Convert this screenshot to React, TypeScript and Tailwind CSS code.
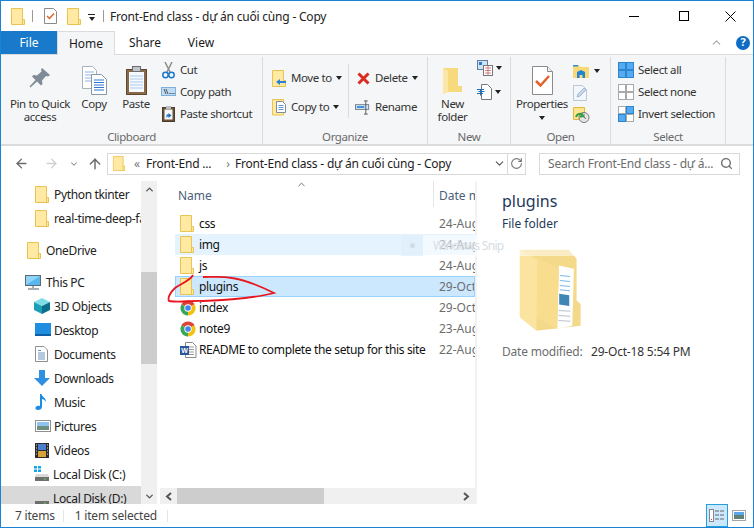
import type { ReactNode } from "react";
import { ArrowLeft, ArrowRight, ArrowUp, ChevronDown, ChevronUp, RotateCw, Search } from "lucide-react";

const Folder = ({ className = "" }: { className?: string }) => (
  <svg width="14" height="17" viewBox="0 0 14 17" className={className}>
    <path d="M.5.5h11v11h2v5H.5z" fill="#ffe9a3" stroke="#e9c452" />
    <path d="M11.5 11.5v5" stroke="#e9c452" />
  </svg>
);

const Chrome = () => (
  <svg width="16" height="16" viewBox="0 0 16 16">
    <path d="M8 8L1.5 4.25A7.5 7.5 0 0 1 14.5 4.25z" fill="#db4437" />
    <path d="M8 8L14.5 4.25A7.5 7.5 0 0 1 8 15.5z" fill="#f4c20d" />
    <path d="M8 8L8 15.5A7.5 7.5 0 0 1 1.5 4.25z" fill="#3aa757" />
    <circle cx="8" cy="8" r="3.7" fill="#fff" />
    <circle cx="8" cy="8" r="2.8" fill="#4285f4" />
  </svg>
);

const WordDoc = () => (
  <svg width="17" height="16" viewBox="0 0 17 16">
    <path d="M5.5.5h7l3.5 3.5v11.500h-10.500z" fill="#fff" stroke="#8a8a8a" />
    <path d="M8 5h6M8 7.500h6M8 10h6M8 12.500h6" stroke="#9a9a9a" />
    <rect x="0" y="4" width="9" height="9" fill="#2b579a" />
    <text x="1.300" y="11" fontSize="7" fontWeight="700" fill="#fff" fontFamily="Liberation Sans">W</text>
  </svg>
);

const PinIcon = () => (
  <svg width="22" height="22" viewBox="0 0 22 22">
    <path d="M13 1l8 7-2 1.500-2-.5-4 4.500.5 3.500-1.500 1.500-4-4-6.500 6-1-1 6-6.500-3.500-3.500 1.500-1.500 3.500.5 4.500-4-.5-2z" fill="#7f8b96" />
  </svg>
);

const CopyBig = () => (
  <svg width="25" height="29" viewBox="0 0 25 29">
    <path d="M.5.5h10l4 4v18H.5z" fill="#fff" stroke="#a9b2bb" />
    <path d="M3 6h9M3 9h9M3 12h9M3 15h9" stroke="#8db4e2" />
    <path d="M9.500 8.500h10l5 5v15h-15z" fill="#fff" stroke="#8a97a5" />
    <path d="M12 14h10M12 16.500h10M12 19h10M12 21.500h10M12 24h10" stroke="#2b78d0" />
  </svg>
);

const PasteBig = () => (
  <svg width="21" height="29" viewBox="0 0 21 29">
    <rect x=".5" y="3.500" width="20" height="25" fill="#8a6a45" stroke="#5e4a34" />
    <rect x="3" y="6" width="15" height="20" fill="#f6f9fd" />
    <path d="M4 10h13M4 13h13M4 16h13M4 19h13M4 22h13" stroke="#a9cbe9" />
    <rect x="6.500" y=".5" width="8" height="5" fill="#bfc5cb" stroke="#6c6c6c" />
  </svg>
);

const Scissors = () => (
  <svg width="13" height="17" viewBox="0 0 13 17">
    <path d="M3 0l5 10M10 0L5 10" stroke="#8d8d8d" strokeWidth="1.500" />
    <circle cx="3.500" cy="13" r="2.700" fill="none" stroke="#1d79c9" strokeWidth="1.500" />
    <circle cx="9.500" cy="13" r="2.700" fill="none" stroke="#1d79c9" strokeWidth="1.500" />
  </svg>
);

const CopyPath = () => (
  <svg width="15" height="10" viewBox="0 0 15 10">
    <rect x=".5" y=".5" width="14" height="8" fill="#bfdcf5" stroke="#7fb0dc" />
    <path d="M3 2l2 5M5 2l2 5" stroke="#333" strokeWidth=".8" />
    <path d="M8.500 6.500h1M10.500 6.500h1M12.500 6.500h1" stroke="#333" />
  </svg>
);

const PasteShortcut = () => (
  <svg width="13" height="16" viewBox="0 0 13 16">
    <rect x=".5" y="1.500" width="12" height="14" fill="#6a5238" stroke="#4a3a28" />
    <rect x="2.500" y="3.500" width="8" height="10" fill="#f5f7fa" />
    <path d="M4.500 12V8.500h2V7l3 2.500-3 2.500v-1.500h-1z" fill="#1f6fbe" />
    <rect x="4" y="0" width="5" height="3" fill="#b9bec4" />
  </svg>
);

const MoveTo = () => (
  <svg width="14" height="17" viewBox="0 0 14 17">
    <path d="M.5.5h11v10h2v6H.5z" fill="#ffe9a3" stroke="#e9c452" />
    <path d="M4 12l4-3v2h6v2H8v2z" fill="#2b82d4" />
  </svg>
);

const CopyTo = () => (
  <svg width="14" height="17" viewBox="0 0 14 17">
    <path d="M.5.500h11v15.500H.5z" fill="#ffe9a3" stroke="#e9c452" />
    <path d="M4.500 2.500h6l3 3v8h-9z" fill="#fff" stroke="#7d8b99" />
    <path d="M6.500 6.500h5M6.500 8.500h5M6.500 10.500h5" stroke="#5b94cf" />
  </svg>
);

const DeleteX = () => (
  <svg width="13" height="13" viewBox="0 0 13 13">
    <path d="M1.500 1.500l10 10M11.500 1.500l-10 10" stroke="#d92b20" strokeWidth="3" />
  </svg>
);

const RenameIcon = () => (
  <svg width="17" height="15" viewBox="0 0 17 15">
    <rect x=".5" y="4.500" width="14" height="5" fill="#d8eafa" stroke="#6d7a87" />
    <rect x="2" y="6" width="8" height="2" fill="#3a8dde" />
    <path d="M11.500.5v14M9.500.5h4M9.500 14.500h4" stroke="#555" />
  </svg>
);

const NewFolderBig = () => (
  <svg width="21" height="28" viewBox="0 0 21 28">
    <path d="M1 1h15v18h4v6H6l-5 2z" fill="#f7d97e" />
    <path d="M1 1l5 3v21l-5 2z" fill="#fbe7a8" />
  </svg>
);

const NewItem = () => (
  <svg width="16" height="16" viewBox="0 0 16 16">
    <rect x=".5" y=".5" width="10" height="9" fill="#cfe3f5" stroke="#5f7f9f" />
    <rect x="2" y="2" width="3" height="3" fill="#2b78d0" />
    <rect x="6.500" y="5.500" width="9" height="10" fill="#fff" stroke="#777" />
    <path d="M8 8h6M8 10.500h6M8 13h6M11 6v9" stroke="#c0504d" strokeWidth=".7" />
  </svg>
);

const EasyAccess = () => (
  <svg width="15" height="16" viewBox="0 0 15 16">
    <path d="M4.500.5h6l4 4v11h-10z" fill="#fff" stroke="#777" />
    <path d="M0 5.500h7M1.500 7.500h6M0 9.500h6" stroke="#1d6fbe" />
    <path d="M3.500 5.500v6" stroke="#1d6fbe" />
  </svg>
);

const PropertiesBig = () => (
  <svg width="21" height="29" viewBox="0 0 21 29">
    <path d="M.5.5h15l5 5v23H.5z" fill="#fff" stroke="#8b8b8b" />
    <path d="M15.500.5v5h5" fill="#eee" stroke="#8b8b8b" />
    <path d="M4 15l4.500 4.500L17 10" fill="none" stroke="#e2622a" strokeWidth="2.500" />
  </svg>
);

const OpenIcon = () => (
  <svg width="16" height="14" viewBox="0 0 16 14">
    <path d="M0 1h6l1 2h9v11H0z" fill="#f9d976" />
    <rect x="0" y="1" width="5" height="1.500" fill="#2e8bd8" />
    <path d="M4 14V8l4-2 4 2v6H9.500v-3h-3v3z" fill="#1f86d6" />
  </svg>
);

const EditIcon = () => (
  <svg width="15" height="16" viewBox="0 0 15 16">
    <path d="M.5.5h9l4 4v11H.5z" fill="#f3f6fa" stroke="#bcc8d6" />
    <path d="M4 12l1-3 6-6 2 2-6 6z" fill="#c7d8ee" stroke="#a5bad5" />
  </svg>
);

const HistoryIcon = () => (
  <svg width="17" height="16" viewBox="0 0 17 16">
    <path d="M.5.500h11v12H.5z" fill="#ffe48f" stroke="#e0b93c" />
    <circle cx="11" cy="10.500" r="5" fill="#e6e6e6" stroke="#777" />
    <path d="M11 7v3.500l2 1" fill="none" stroke="#555" strokeWidth=".8" />
    <path d="M3 10a4.500 4.500 0 0 1 6-3l-1 2.500 3-.5" fill="none" stroke="#2f9e3f" strokeWidth="2" />
  </svg>
);

const SelectGrid = ({ on }: { on: boolean[] }) => (
  <svg width="16" height="16" viewBox="0 0 16 16">
    {[0, 1, 2, 3].map((i) => {
      const x = i % 2 === 0 ? 0.5 : 8.5;
      const y = i < 2 ? 0.5 : 8.5;
      return (
        <rect key={i} x={x} y={y} width="7" height="7" fill={on[i] ? "#57aaf0" : "#fff"} stroke={on[i] ? "#2b86d2" : "#a9a9a9"} />
      );
    })}
  </svg>
);

const PcIcon = () => (
  <svg width="17" height="15" viewBox="0 0 17 15">
    <rect x=".5" y=".5" width="15" height="10" fill="#58b8ee" stroke="#5d6a75" />
    <path d="M1 1h14L1 10z" fill="#8fd4f7" />
    <path d="M8 11v2M3 14h11" stroke="#8a949c" strokeWidth="1.500" />
  </svg>
);

const CubeIcon = () => (
  <svg width="16" height="16" viewBox="0 0 16 16">
    <path d="M8 0l8 4-8 4-8-4z" fill="#7fdde8" />
    <path d="M0 4l8 4v8l-8-4z" fill="#1d9fb5" />
    <path d="M16 4L8 8v8l8-4z" fill="#0b6f8c" />
  </svg>
);

const DesktopIcon = () => (
  <svg width="16" height="14" viewBox="0 0 16 14">
    <rect x="0" y="0" width="16" height="11" fill="#1f8ee0" />
    <rect x="0" y="11" width="16" height="2" fill="#0d5fa8" />
  </svg>
);

const DocsIcon = () => (
  <svg width="13" height="16" viewBox="0 0 13 16">
    <path d="M.5.500h8.500l3.500 3.500v11.500H.5z" fill="#fff" stroke="#8f8f8f" />
    <path d="M3 4.500h3M3 7h7M3 9h7M3 11h7M3 13h7" stroke="#6a94bf" />
  </svg>
);

const DownloadsIcon = () => (
  <svg width="16" height="16" viewBox="0 0 16 16">
    <path d="M5 0h6v8h5l-8 8-8-8h5z" fill="#2f8fe0" />
  </svg>
);

const MusicIcon = () => (
  <svg width="12" height="16" viewBox="0 0 12 16">
    <path d="M5 0h1.500c.5 3 4.500 3.500 4.500 8-1-2-3-3-4-3v8c0 2-2 3-4 3s-3-1-2.500-2.500C1 12 3.500 11.500 5 12z" fill="#1c8ce6" />
  </svg>
);

const PicturesIcon = () => (
  <svg width="16" height="12" viewBox="0 0 16 12">
    <rect x=".5" y=".5" width="15" height="11" fill="#fff" stroke="#8f8f8f" />
    <rect x="2" y="2" width="12" height="4" fill="#8dc3ee" />
    <rect x="2" y="6" width="12" height="4" fill="#6f8f7e" />
  </svg>
);

const VideosIcon = () => (
  <svg width="14" height="15" viewBox="0 0 14 15">
    <rect x="0" y="0" width="14" height="15" fill="#2b2b2b" />
    <rect x="3" y="1" width="8" height="6" fill="#4a7fd0" />
    <rect x="3" y="8" width="8" height="6" fill="#d8a23a" />
    <path d="M1 2h1M1 5h1M1 8h1M1 11h1M12 2h1M12 5h1M12 8h1M12 11h1" stroke="#ddd" />
  </svg>
);

const DiskIcon = ({ win }: { win?: boolean }) => (
  <svg width="16" height="16" viewBox="0 0 16 16">
    {win && <path d="M0 0h3v2.500H0zM4 0h3v2.500H4zM0 3.500h3V6H0zM4 3.500h3V6H4z" fill="#16a5e8" />}
    <path d="M2 8h12l1 3H1z" fill="#d9d9d9" />
    <rect x="1" y="11" width="14" height="4" fill="#6e6e6e" />
    <rect x="10" y="12.500" width="2" height="1" fill="#57d957" />
  </svg>
);

const BigFolder = () => (
  <svg width="67" height="87" viewBox="680 310 200 260">
    <path d="M690 318h145l23 27v125l12 10v65l-132 15z" fill="#f5d98a" />
    <path d="M805 365l45 10-5 170-45 10z" fill="#fdfeff" />
    <path d="M808 395l30 3M808 410l30 3M808 425l30 3M808 438l30 3" stroke="#7db7e8" strokeWidth="3" />
    <path d="M806 450l30 4v32l-30-4z" fill="#3f86b5" />
    <path d="M804 500l35 2M804 515l35 2M804 530l35 2" stroke="#b9c3cc" strokeWidth="3" />
    <path d="M715 330l90 45-5 180-62-35z" fill="#f9dd8f" />
    <path d="M688 318l52 32-2 210-50-40z" fill="#fbe49f" />
  </svg>
);

const Caret = () => <span className="inline-block w-0 h-0 border-x-[3.500px] border-x-transparent border-t-[4px] border-t-[#222]" />;

const BigButton = ({ icon, label, width, mt = "" }: { icon: ReactNode; label: ReactNode; width: string; mt?: string }) => (
  <div className={`flex flex-col items-center ${width}`}>
    <div className={`h-[38px] flex items-end justify-center ${mt}`}>{icon}</div>
    <div className="mt-[2px] text-center leading-[13px]">{label}</div>
  </div>
);

const SmallRow = ({ icon, label, caret, dim }: { icon: ReactNode; label: string; caret?: boolean; dim?: boolean }) => (
  <div className={`h-[22px] flex items-center gap-[4px] ${dim ? "text-[#444]" : ""}`}>
    <div className="w-[16px] flex justify-center">{icon}</div>
    <span>{label}</span>
    {caret && <Caret />}
  </div>
);

const RibbonGroup = ({ width, label, children }: { width: string; label: string; children: ReactNode }) => (
  <div className={`${width} flex flex-col h-[87px] mt-[2px] border-r border-[#dadbdc] shrink-0`}>
    <div className="flex-1 flex min-h-0">{children}</div>
    <div className="h-[14px] leading-[14px] text-center text-[#6a6a6a]">{label}</div>
  </div>
);

const NavRow = ({ icon, label, indent, selected }: { icon: ReactNode; label: string; indent: string; selected?: boolean }) => (
  <div className={`h-[24px] shrink-0 flex items-center ${indent} ${selected ? "bg-[#d9d9d9]" : ""}`}>
    <div className="w-[19px] shrink-0 flex justify-start items-center">{icon}</div>
    <span className="whitespace-nowrap pt-[1px]">{label}</span>
  </div>
);

const files = [
  { name: "css", date: "24-Aug", icon: <Folder />, cls: "" },
  { name: "img", date: "24-Aug", icon: <Folder />, cls: "bg-[#e5f3ff]" },
  { name: "js", date: "24-Aug", icon: <Folder />, cls: "" },
  { name: "plugins", date: "29-Oct", icon: <Folder />, cls: "bg-[#cce8ff] outline outline-1 -outline-offset-1 outline-[#99d1ff]" },
  { name: "index", date: "29-Oct", icon: <Chrome />, cls: "" },
  { name: "note9", date: "23-Aug", icon: <Chrome />, cls: "" },
  { name: "README to complete the setup for this site", date: "22-Aug", icon: <WordDoc />, cls: "" },
];

export default function App() {
  return (
    <div
      className="relative w-[754px] h-[528px] overflow-hidden bg-white border border-[#1883d7] flex flex-col text-[12px] text-[#1c1c1c]"
      style={{ fontFamily: '"Noto Sans", sans-serif' }}
    >
      {/* title bar */}
      <div className="h-[30px] shrink-0 flex items-center">
        <Folder className="ml-[10px]" />
        <div className="w-px h-[12px] bg-[#9a9a9a] ml-[7px]" />
        <div className="ml-[11px] flex">
          <svg width="13" height="16" viewBox="0 0 13 16">
            <path d="M.5.500h9l3 3v12H.5z" fill="#fff" stroke="#8b8b8b" />
            <path d="M3 8l2.500 2.500L10 5.500" fill="none" stroke="#e2622a" strokeWidth="1.500" />
          </svg>
        </div>
        <Folder className="ml-[10px]" />
        <div className="ml-[7px] flex flex-col items-center gap-[2px] mt-[2px]">
          <div className="w-[7px] h-px bg-[#222]" />
          <Caret />
        </div>
        <div className="w-px h-[12px] bg-[#9a9a9a] ml-[8px]" />
        <span className="ml-[6px] pt-[2px] text-[#222] tracking-[-0.2px]">Front-End class - dự án cuối cùng - Copy</span>
        <div className="ml-auto flex items-center h-full">
          <div className="w-[46px] mr-[4px] flex justify-center"><div className="w-[10px] h-px bg-black" /></div>
          <div className="w-[46px] flex justify-center"><div className="w-[10px] h-[10px] border border-black" /></div>
          <div className="w-[46px] flex justify-center">
            <svg width="11" height="11" viewBox="0 0 11 11"><path d="M.5.5l10 10M10.500.5l-10 10" stroke="#000" /></svg>
          </div>
        </div>
      </div>

      {/* tabs */}
      <div className="h-[24px] shrink-0 flex items-stretch border-b border-[#dadbdc]">
        <div className="w-[56px] bg-[#1979ca] text-white flex items-center justify-center">File</div>
        <div className="w-[58px] h-[24px] bg-[#f5f6f7] border-x border-t border-[#dadbdc] flex items-center justify-center">Home</div>
        <div className="w-[60px] flex items-center justify-center">Share</div>
        <div className="w-[52px] flex items-center justify-center">View</div>
        <div className="ml-auto flex items-center gap-[13px] mr-[3px]">
          <ChevronUp size={13} color="#a8a8a8" />
          <div className="w-[14px] h-[14px] rounded-full bg-[#0f6cc4] text-white text-[11px] font-bold flex items-center justify-center">?</div>
        </div>
      </div>

      {/* ribbon */}
      <div className="h-[91px] shrink-0 bg-[#f5f6f7] border-b-2 border-[#dadbdc] flex text-[#333] text-[11.5px] tracking-[-0.4px]">
        <RibbonGroup width="w-[262px]" label="Clipboard">
          <BigButton icon={<PinIcon />} label={<>Pin to Quick<br />access</>} width="w-[78px]" mt="-mt-[6px] mb-[6px]" />
          <BigButton icon={<CopyBig />} label="Copy" width="w-[30px]" />
          <BigButton icon={<PasteBig />} label="Paste" width="w-[54px]" />
          <div className="pt-[2px] ml-[-3px] whitespace-nowrap">
            <SmallRow icon={<Scissors />} label="Cut" />
            <SmallRow icon={<CopyPath />} label="Copy path" />
            <SmallRow icon={<PasteShortcut />} label="Paste shortcut" />
          </div>
        </RibbonGroup>
        <RibbonGroup width="w-[165px]" label="Organize">
          <div className="ml-[8px] pt-[10px] flex flex-col gap-[7px] w-[77px] whitespace-nowrap">
            <SmallRow icon={<MoveTo />} label="Move to" caret />
            <SmallRow icon={<CopyTo />} label="Copy to" caret />
          </div>
          <div className="w-px h-[54px] mt-[7px] bg-[#dadbdc]" />
          <div className="ml-[6px] pt-[10px] flex flex-col gap-[7px] whitespace-nowrap">
            <SmallRow icon={<DeleteX />} label="Delete" caret />
            <SmallRow icon={<RenameIcon />} label="Rename" />
          </div>
        </RibbonGroup>
        <RibbonGroup width="w-[83px]" label="New">
          <BigButton icon={<NewFolderBig />} label={<>New<br />folder</>} width="w-[49px]" />
          <div className="pt-[2px] flex flex-col gap-[6px]">
            <div className="flex items-center gap-[3px] h-[18px]"><NewItem /><Caret /></div>
            <div className="flex items-center gap-[3px] h-[18px]"><EasyAccess /><Caret /></div>
          </div>
        </RibbonGroup>
        <RibbonGroup width="w-[100px]" label="Open">
          <div className="w-[62px] flex flex-col items-center">
            <div className="h-[38px] flex items-end justify-center"><PropertiesBig /></div>
            <div className="mt-[2px] leading-[13px]">Properties</div>
            <div className="mt-[6px] flex"><Caret /></div>
          </div>
          <div className="pt-[3px] flex flex-col">
            <div className="h-[22px] flex items-center gap-[5px]"><OpenIcon /><Caret /></div>
            <div className="h-[22px] flex items-center"><EditIcon /></div>
            <div className="h-[22px] flex items-center"><HistoryIcon /></div>
          </div>
        </RibbonGroup>
        <RibbonGroup width="w-[115px]" label="Select">
          <div className="ml-[7px] pt-[2px] whitespace-nowrap">
            <SmallRow icon={<SelectGrid on={[true, true, true, true]} />} label="Select all" />
            <SmallRow icon={<SelectGrid on={[false, false, false, false]} />} label="Select none" />
            <SmallRow icon={<SelectGrid on={[false, true, true, false]} />} label="Invert selection" />
          </div>
        </RibbonGroup>
      </div>

      {/* address bar */}
      <div className="h-[35px] shrink-0 flex items-center">
        <div className="w-[106px] flex items-center pl-[13px]">
          <ArrowLeft size={15} color="#6a6a6a" strokeWidth={2.200} />
          <ArrowRight size={15} color="#cfcfcf" strokeWidth={2.200} className="ml-[15px]" />
          <ChevronDown size={10} color="#8a8a8a" strokeWidth={2.500} className="ml-[10px]" />
          <ArrowUp size={16} color="#6a6a6a" strokeWidth={2.200} className="ml-[8px]" />
        </div>
        <div className="w-[419px] h-[22px] border border-[#d9d9d9] flex items-center tracking-[-0.2px]">
          <Folder className="ml-[4px] scale-90" />
          <span className="ml-[8px] text-[#777]">«</span>
          <span className="ml-[6px] pt-[1px] w-[76px] whitespace-nowrap">Front-End ...</span>
          <span className="text-[#777] w-[12px] text-center">›</span>
          <span className="ml-[1px] pt-[1px] whitespace-nowrap">Front-End class - dự án cuối cùng - Copy</span>
          <ChevronDown size={13} color="#555" className="ml-auto" />
          <div className="w-px h-full bg-[#d9d9d9] ml-[1px]" />
          <RotateCw size={13} color="#777" className="mx-[2px]" />
        </div>
        <div className="ml-[13px] w-[201px] h-[22px] border border-[#d9d9d9] flex items-center pl-[8px] text-[#6d6d6d] tracking-[-0.2px]">
          <span className="whitespace-nowrap pt-[1px]">Search Front-End class - dự á...</span>
          <Search size={13} color="#6d6d6d" strokeWidth={2.500} className="ml-auto mr-[6px]" />
        </div>
      </div>

      {/* main */}
      <div className="flex-1 min-h-0 flex">
        <div className="w-[156px] shrink-0 flex">
          <div className="w-[140px] overflow-hidden flex flex-col pt-[1px] text-[#222] tracking-[-0.35px]">
            <NavRow icon={<Folder />} label="Python tkinter" indent="pl-[34px]" />
            <NavRow icon={<Folder />} label="real-time-deep-face-recognition" indent="pl-[34px]" />
            <div className="h-[8px] shrink-0" />
            <NavRow icon={<Folder />} label="OneDrive" indent="pl-[26px]" />
            <div className="h-[8px] shrink-0" />
            <NavRow icon={<div className="-ml-[2px]"><PcIcon /></div>} label="This PC" indent="pl-[26px]" />
            <NavRow icon={<div className="-ml-[1px]"><CubeIcon /></div>} label="3D Objects" indent="pl-[34px]" />
            <NavRow icon={<DesktopIcon />} label="Desktop" indent="pl-[34px]" />
            <NavRow icon={<DocsIcon />} label="Documents" indent="pl-[34px]" />
            <NavRow icon={<div className="-ml-[1px]"><DownloadsIcon /></div>} label="Downloads" indent="pl-[34px]" />
            <NavRow icon={<MusicIcon />} label="Music" indent="pl-[34px]" />
            <NavRow icon={<PicturesIcon />} label="Pictures" indent="pl-[34px]" />
            <NavRow icon={<VideosIcon />} label="Videos" indent="pl-[34px]" />
            <NavRow icon={<DiskIcon win />} label="Local Disk (C:)" indent="pl-[33px]" />
            <NavRow icon={<DiskIcon />} label="Local Disk (D:)" indent="pl-[33px]" selected />
          </div>
          <div className="w-[16px] bg-[#f0f0f0] flex flex-col items-center justify-between">
            <div className="w-full">
              <div className="h-[17px] flex items-center justify-center"><ChevronUp size={11} color="#555" strokeWidth={3} /></div>
              <div className="h-[74px]" />
              <div className="h-[92px] bg-[#cdcdcd]" />
            </div>
            <div className="h-[15px] flex items-center"><ChevronDown size={11} color="#555" strokeWidth={3} /></div>
          </div>
        </div>

        <div className="w-[317px] shrink-0 ml-[3px] flex flex-col border-r-[2px] border-[#f2f2f2]">
          <div className="relative h-[32px] shrink-0 flex items-start pl-[15px] text-[#4c607a]">
            <ChevronUp size={11} color="#666" className="absolute left-[136px] top-[-2px]" />
            <div className="w-[258px] h-[26px] flex items-center pl-[3px] pt-[4px]">Name</div>
            <div className="h-[26px] border-l border-[#e5e5e5] pl-[5px] pt-[4px] flex items-center whitespace-nowrap overflow-hidden flex-1">Date m</div>
          </div>
          <div className="flex-1 min-h-0 pl-[15px] flex flex-col">
            {files.map((f) => (
              <div key={f.name} className={`h-[21px] shrink-0 flex items-center ${f.cls}`}>
                <div className="w-[24px] pl-[5px] flex justify-start">{f.icon}</div>
                <span className="w-[240px] pt-[1px] whitespace-nowrap text-[#111] tracking-[-0.35px]">{f.name}</span>
                <span className="text-[#6d6d6d] pt-[1px] whitespace-nowrap overflow-hidden flex-1">{f.date}</span>
              </div>
            ))}
          </div>
          <div className="h-[16px] shrink-0 bg-[#f0f0f0] flex items-center">
            <div className="w-[17px] flex justify-center">
              <svg width="7" height="9" viewBox="0 0 7 9"><path d="M6 1L2 4.500 6 8" fill="none" stroke="#555" strokeWidth="2" /></svg>
            </div>
            <div className="w-[147px] h-full bg-[#cdcdcd]" />
            <div className="ml-auto w-[17px] flex justify-center">
              <svg width="7" height="9" viewBox="0 0 7 9"><path d="M1 1l4 3.500L1 8" fill="none" stroke="#555" strokeWidth="2" /></svg>
            </div>
          </div>
        </div>

        <div className="flex-1 pl-[25px] pt-[9px] flex flex-col">
          <div className="text-[16px] leading-[22px] text-[#1e395b]">plugins</div>
          <div className="text-[#1e395b] mt-[3px] leading-[18px]">File folder</div>
          <div className="ml-[15px] mt-[14px]"><BigFolder /></div>
          <div className="flex mt-[10px] leading-[16px] tracking-[-0.2px]">
            <span className="w-[89px] text-[#6d6d6d]">Date modified:</span>
            <span className="text-[#333]">29-Oct-18 5:54 PM</span>
          </div>
        </div>
      </div>

      {/* status bar */}
      <div className="h-[23px] shrink-0 flex items-center text-[#444] tracking-[-0.2px]">
        <span className="ml-[14px]">7 items</span>
        <div className="w-px h-[12px] bg-[#e5e5e5] ml-[8px]" />
        <span className="ml-[11px]">1 item selected</span>
        <div className="w-px h-[12px] bg-[#e5e5e5] ml-[10px]" />
        <div className="ml-auto mr-[7px] flex items-center gap-[4px]">
          <div className="w-[22px] h-[23px] bg-[#cce8ff] border border-[#26a0da] flex items-center justify-center">
            <svg width="16" height="13" viewBox="0 0 16 13">
              <rect x=".5" y=".5" width="4" height="12" fill="#fff" stroke="#888" />
              <path d="M6 2h4M11 2h4M6 6h4M11 6h4M6 10h4M11 10h4" stroke="#666" />
              <path d="M2 10.500h1" stroke="#d33" />
            </svg>
          </div>
          <svg width="14" height="11" viewBox="0 0 14 11">
            <rect x=".5" y=".5" width="13" height="10" fill="#fff" stroke="#a5a5a5" />
            <rect x="2" y="2" width="10" height="3" fill="#5aa7ee" />
            <rect x="2" y="5" width="10" height="4" fill="#5f8475" />
          </svg>
        </div>
      </div>

      {/* snip toolbar ghost over the list */}
      <div className="absolute left-[400px] top-[234px] w-[173px] h-[21px] bg-white/50 flex items-center pointer-events-none">
        <div className="w-[22px] h-full bg-[#dcecfb]/70 flex items-center justify-center">
          <div className="w-[5px] h-[5px] rounded-full bg-[#cfdbe6]" />
        </div>
        <span className="ml-[10px] pt-[1px] text-[#d6dde4] tracking-[-0.7px]">Windows Snip</span>
      </div>

      {/* red pen mark */}
      <svg className="absolute left-0 top-0 pointer-events-none" width="754" height="528" viewBox="1 1 754 528">
        <path
          d="M193 275C190 281 180 284 175 288C171 292 167 297 169 301C180 303 193 300 203 301C225 300 255 298 274 293C262 287 245 280 232 278C222 276 212 277 203 277"
          fill="none"
          stroke="#e8161e"
          strokeWidth="1.800"
        />
      </svg>
    </div>
  );
}
